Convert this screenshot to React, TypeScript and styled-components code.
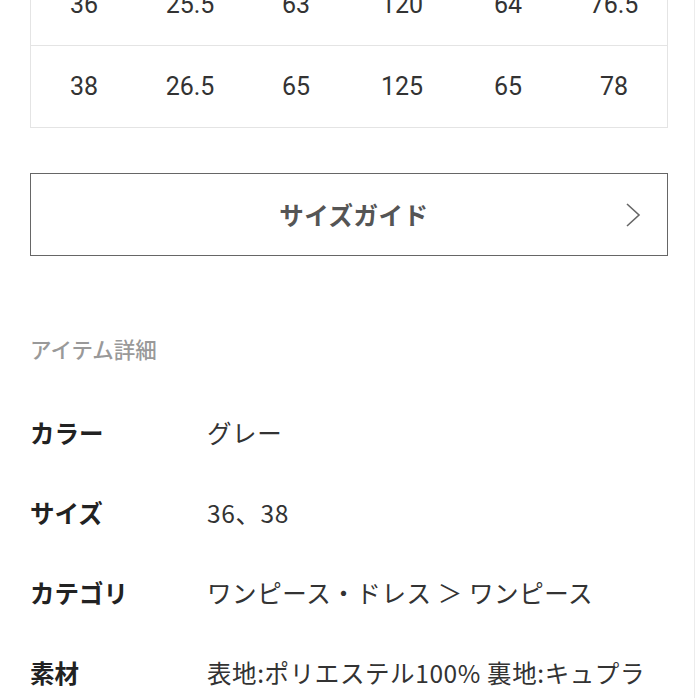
import styled, { createGlobalStyle } from "styled-components";

const GlobalStyle = createGlobalStyle`
	html, body {
		margin: 0;
		padding: 0;
		background: #fff;
	}
	body {
		font-family: Roboto, "Noto Sans CJK JP", sans-serif;
		-webkit-font-smoothing: antialiased;
	}
`;

const Page = styled.div`
	width: 695px;
	height: 698px;
	overflow: hidden;
	padding: 0 0 0 30px;
	box-sizing: border-box;
	border-right: 1px solid #ececec;
`;

const Inner = styled.div`
	width: 638px;
	display: flex;
	flex-direction: column;
`;

const SizeTable = styled.div`
	margin-top: -37px;
	border: 1px solid #e4e4e4;
`;

const TableRow = styled.div`
	display: grid;
	grid-template-columns: repeat(6, 1fr);
	align-items: center;
	height: 81px;

	& + & {
		border-top: 1px solid #e4e4e4;
	}
`;

const Cell = styled.span`
	text-align: center;
	font-family: Roboto, "Liberation Sans", sans-serif;
	font-size: 25px;
	color: #333;
`;

const GuideButton = styled.button`
	margin-top: 45px;
	height: 83px;
	box-sizing: border-box;
	border: 1.5px solid #666;
	background: #fff;
	display: grid;
	grid-template-columns: 1fr auto 1fr;
	align-items: center;
	padding: 0 0 0 10px;
	cursor: pointer;
`;

const GuideLabel = styled.span`
	grid-column: 2;
	font-family: "Noto Sans CJK JP", sans-serif;
	font-size: 24.5px;
	font-weight: 700;
	color: #555;
	letter-spacing: 0.5px;
`;

const Chevron = styled.svg`
	grid-column: 3;
	justify-self: end;
	margin-right: 26px;
	width: 16px;
	height: 26px;
`;

const SectionTitle = styled.h2`
	margin: 78px 0 0;
	font-family: "Noto Sans CJK JP", sans-serif;
	font-size: 21.5px;
	font-weight: 500;
	line-height: 30px;
	color: #999;
`;

const DetailList = styled.dl`
	margin: 28px 0 0;
	display: flex;
	flex-direction: column;
`;

const DetailRow = styled.div`
	display: grid;
	grid-template-columns: 177px 1fr;
	align-items: center;
	height: 80px;
`;

const Label = styled.dt`
	font-family: "Noto Sans CJK JP", sans-serif;
	font-size: 24.5px;
	font-weight: 700;
	color: #222;
`;

const Value = styled.dd`
	margin: 0;
	font-family: "Noto Sans CJK JP", sans-serif;
	font-size: 24.5px;
	letter-spacing: 0.6px;
	color: #333;
	white-space: nowrap;
`;

const rows = [
	["36", "25.5", "63", "120", "64", "76.5"],
	["38", "26.5", "65", "125", "65", "78"],
];

const details = [
	{ label: "カラー", value: "グレー" },
	{ label: "サイズ", value: "36、38" },
	{ label: "カテゴリ", value: "ワンピース・ドレス ＞ ワンピース" },
	{ label: "素材", value: "表地:ポリエステル100% 裏地:キュプラ" },
];

export default function App() {
	return (
		<>
			<GlobalStyle />
			<Page>
				<Inner>
					<SizeTable>
						{rows.map((row, i) => (
							<TableRow key={i}>
								{row.map((v, j) => (
									<Cell key={j}>{v}</Cell>
								))}
							</TableRow>
						))}
					</SizeTable>

					<GuideButton>
						<GuideLabel>サイズガイド</GuideLabel>
						<Chevron viewBox="0 0 16 26">
							<polyline points="2,2 14,13 2,24" fill="none" stroke="#666" strokeWidth="1.6" />
						</Chevron>
					</GuideButton>

					<SectionTitle>アイテム詳細</SectionTitle>

					<DetailList>
						{details.map((d) => (
							<DetailRow key={d.label}>
								<Label>{d.label}</Label>
								<Value>{d.value}</Value>
							</DetailRow>
						))}
					</DetailList>
				</Inner>
			</Page>
		</>
	);
}
